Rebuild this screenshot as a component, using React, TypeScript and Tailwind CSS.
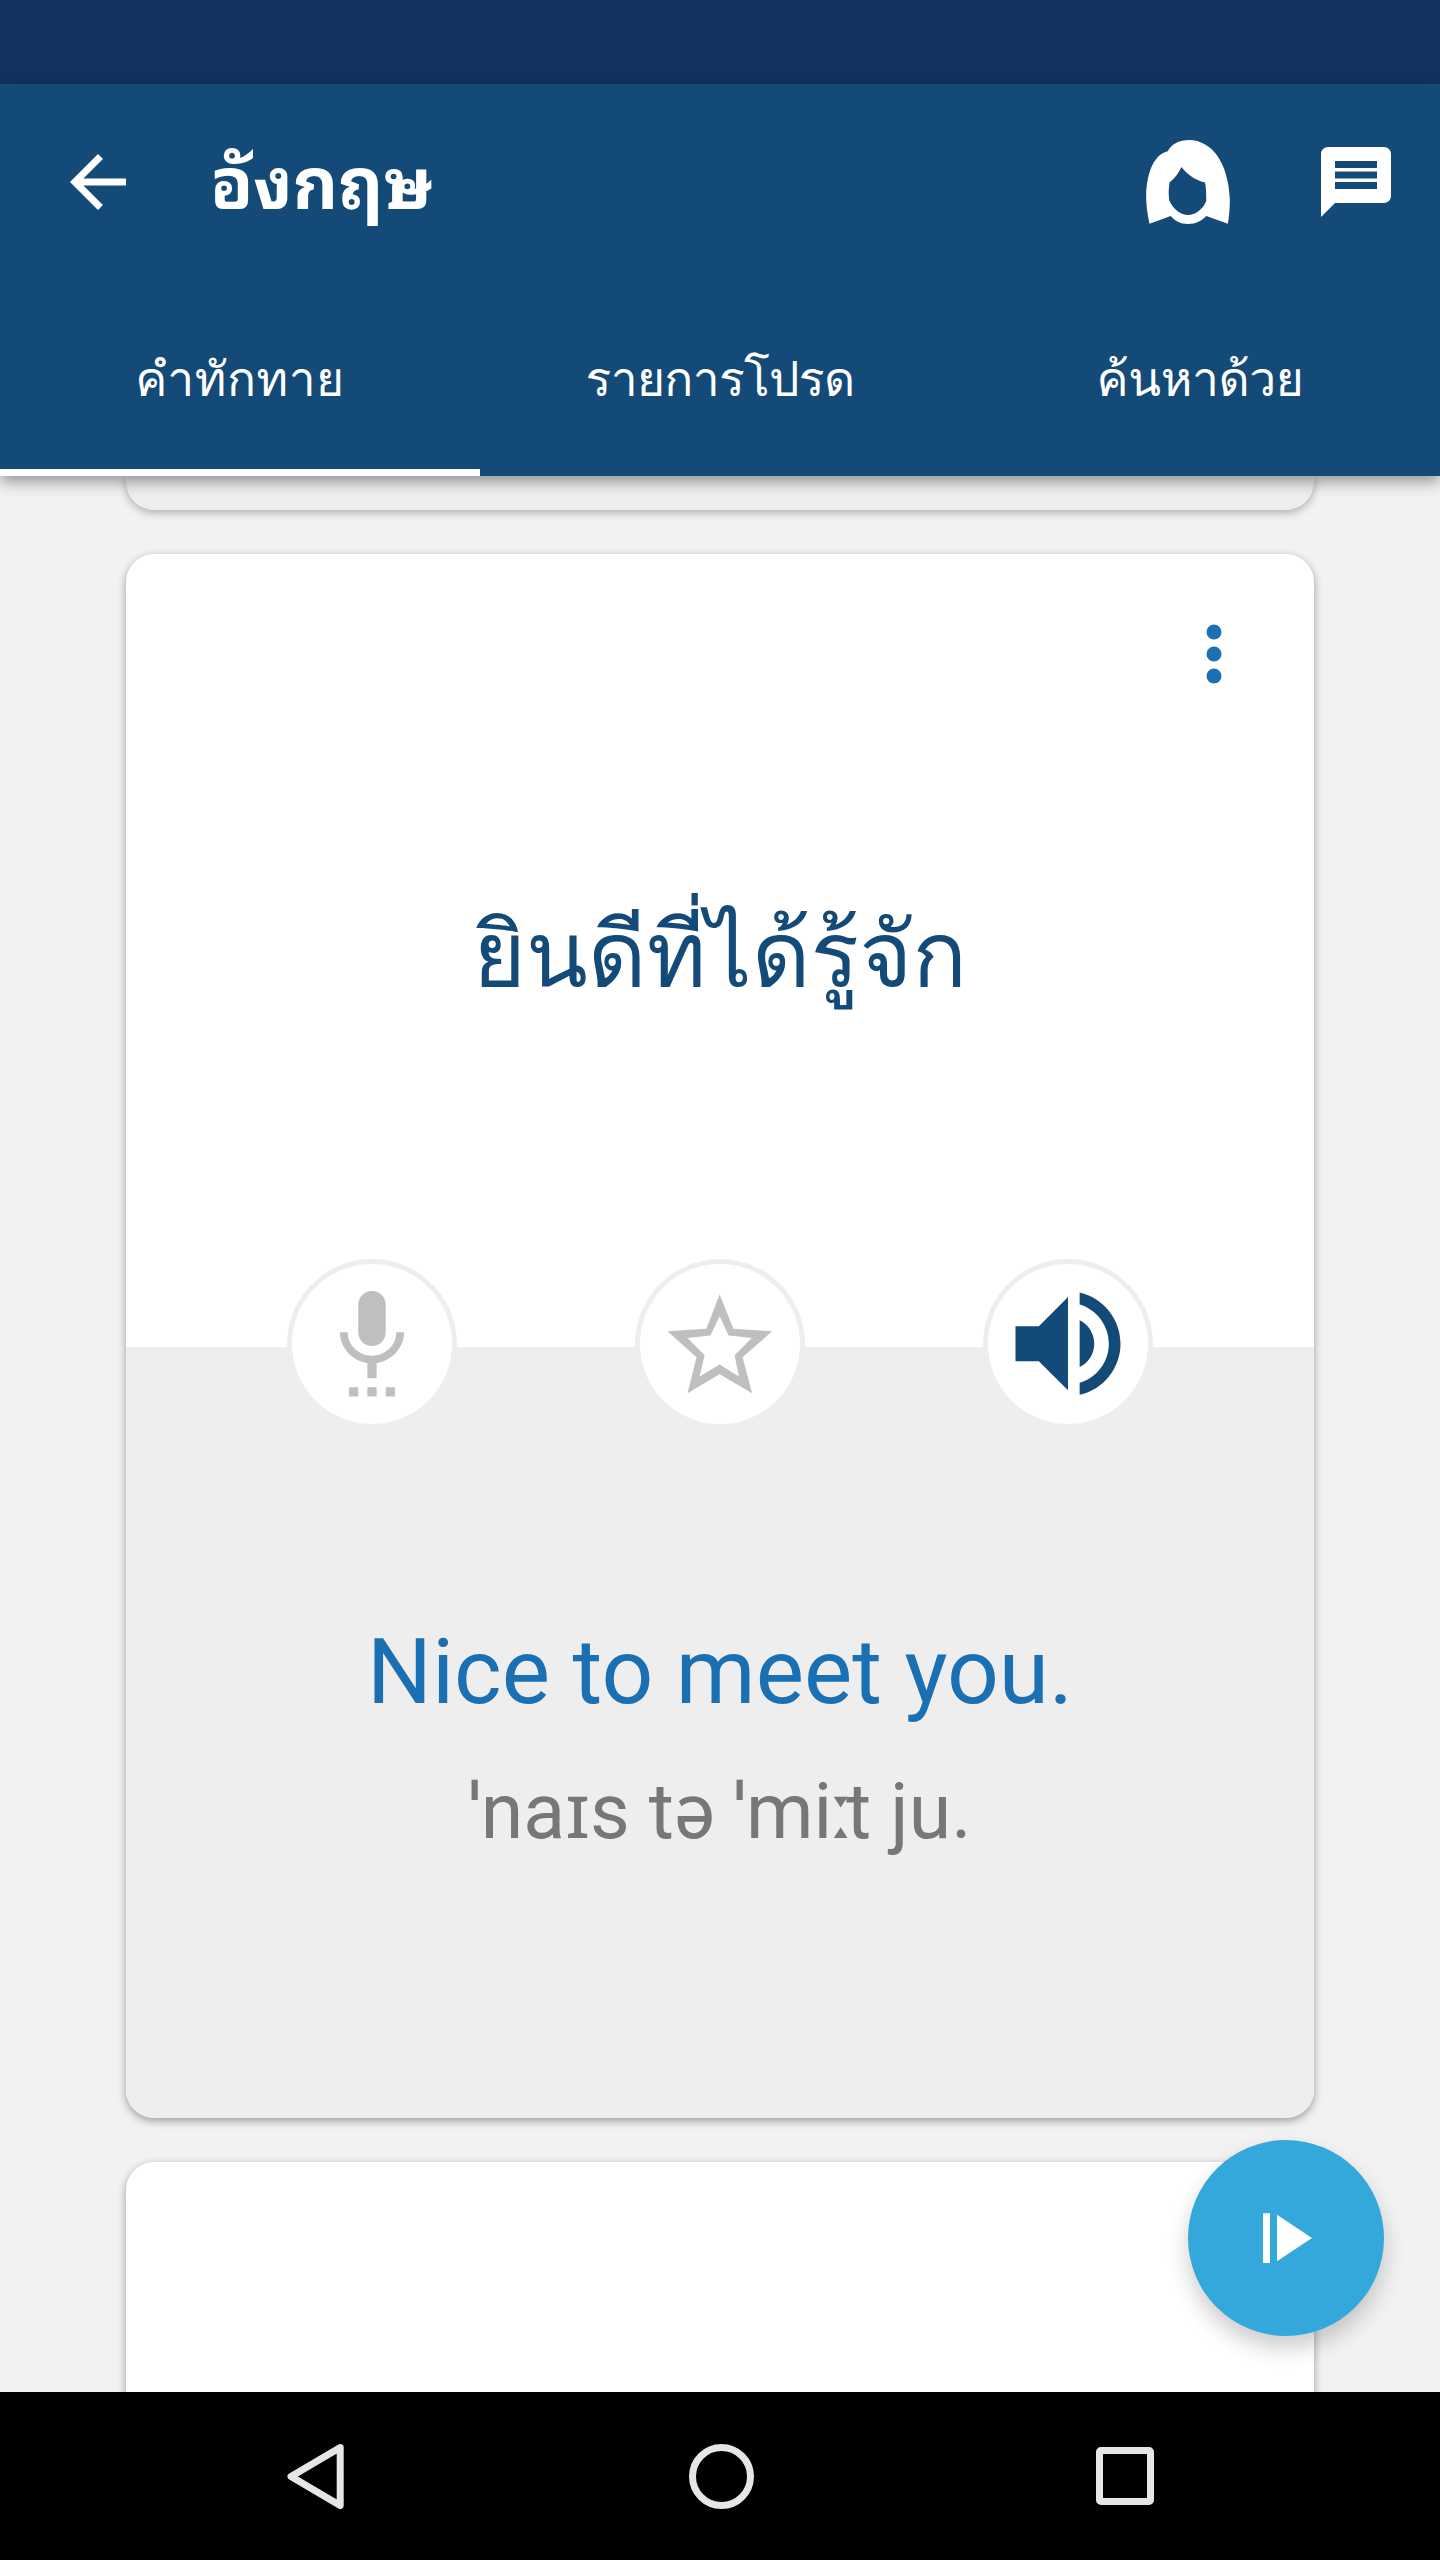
import React from 'react';

function BackArrow() {
  return (
    <svg viewBox="0 0 24 24" className="size-[84px] shrink-0 fill-white">
      <path d="M20 11H7.83l5.59-5.59L12 4l-8 8 8 8 1.41-1.41L7.83 13H20v-2z" />
    </svg>
  );
}

function HairIcon() {
  return (
    <svg viewBox="138 59 252 253" className="size-[84px] shrink-0 fill-white">
      <path
        fillRule="evenodd"
        d="M148 311C140 275 138 248 138 228C140 150 165 102 203 93C215 70 240 59 267 59C335 60 386 125 390 240C390 265 388 290 384 311L319 288C305 303 288 312 264 312C240 312 225 303 212 288ZM244 140C235 160 225 172 208 187Q204 215 207 240C220 270 243 285 264 285C285 285 308 270 319 243Q319 200 315 187C285 180 260 160 244 140Z"
      />
    </svg>
  );
}

function MessageIcon() {
  return (
    <svg viewBox="0 0 24 24" className="size-[84px] shrink-0 fill-white">
      <path d="M20 2H4c-1.1 0-1.99.9-1.99 2L2 22l4-4h14c1.1 0 2-.9 2-2V4c0-1.1-.9-2-2-2zm-2 12H6v-2h12v2zm0-3H6V9h12v2zm0-3H6V6h12v2z" />
    </svg>
  );
}

function RoundButton({ label, children }: { label: string; children: React.ReactNode }) {
  return (
    <button
      aria-label={label}
      className="size-[170px] shrink-0 rounded-full border-[5px] border-[#eeeeee] bg-white"
    >
      <svg viewBox="5 5 160 160" className="size-[160px]">
        {children}
      </svg>
    </button>
  );
}

const tabs = [
  { label: 'คำทักทาย', tracking: 'tracking-[0.5px]' },
  { label: 'รายการโปรด', tracking: 'tracking-[-0.7px]' },
  { label: 'ค้นหาด้วย', tracking: 'tracking-[-0.4px]' },
];

export default function App() {
  return (
    <div className="flex h-[2560px] w-[1440px] flex-col overflow-hidden bg-[#f2f2f2] font-['Roboto','Droid_Sans_Thai','Loma',sans-serif]">
      <div className="h-[84px] shrink-0 bg-[#12325f]" />

      <header className="relative z-10 shrink-0 bg-[#144a78] text-white shadow-[0_6px_14px_rgba(0,0,0,0.38)]">
        <div className="flex h-[196px] items-center pr-[42px] pl-[56px]">
          <BackArrow />
          <h1 className="mb-[8px] ml-[70px] flex-1 font-['Noto_Sans_Thai_Looped','Noto_Sans_Thai',sans-serif] text-[70.5px] leading-[84px] font-bold whitespace-nowrap">
            อังกฤษ
          </h1>
          <HairIcon />
          <div className="w-[84px]" />
          <MessageIcon />
        </div>
        <nav className="grid h-[196px] grid-cols-3">
          {tabs.map((tab, i) => (
            <div key={tab.label} className="flex flex-col">
              <div className="flex h-[189px] items-center justify-center pt-[10px] text-[48px] leading-[60px] whitespace-nowrap">
                <span className={tab.tracking}>{tab.label}</span>
              </div>
              {i === 0 && <div className="h-[7px] bg-white" />}
            </div>
          ))}
        </nav>
      </header>

      <main className="relative flex h-[1916px] shrink-0 flex-col gap-[44px] overflow-hidden px-[126px]">
        <div className="h-[34px] shrink-0 rounded-b-[28px] bg-[#eeeeee] shadow-[0_3px_8px_rgba(0,0,0,0.28)]" />

        <section className="flex h-[1564px] shrink-0 flex-col rounded-[28px] bg-white shadow-[0_3px_8px_rgba(0,0,0,0.36)]">
          <div className="flex h-[705px] shrink-0 flex-col">
            <div className="flex justify-end pt-[70px] pr-[92px]">
              <svg viewBox="0 0 16 60" className="h-[60px] w-[16px] fill-[#1a70b3]">
                <circle cx="8" cy="8" r="7.5" />
                <circle cx="8" cy="30" r="7.5" />
                <circle cx="8" cy="52" r="7.5" />
              </svg>
            </div>
            <p className="mt-[201px] text-center text-[90.5px] leading-[140px] whitespace-nowrap text-[#144a78]">
              ยินดีที่ได้รู้จัก
            </p>
          </div>

          <div className="relative z-10 flex h-[88px] shrink-0 items-start justify-between px-[161px]">
            <RoundButton label="Record">
              <path
                transform="translate(30 27.5) scale(4.583)"
                fill="#bfbfbf"
                d="M7 24h2v-2H7v2zm5-11c1.66 0 2.99-1.34 2.99-3L15 4c0-1.66-1.34-3-3-3S9 2.34 9 4v6c0 1.66 1.34 3 3 3zm-1 11h2v-2h-2v2zm4 0h2v-2h-2v2zm4-14h-1.7c0 3-2.54 5.1-5.3 5.1S6.7 13 6.7 10H5c0 3.41 2.72 6.23 6 6.72V20h2v-3.28c3.28-.49 6-3.31 6-6.72z"
              />
            </RoundButton>
            <RoundButton label="Favorite">
              <path
                fill="#bfbfbf"
                fillRule="evenodd"
                d="M84.6 35.6L98.4 69.8L137.1 72.3L107.6 98.3L117.1 134.3L84.6 115.3L52.5 134.3L61.5 98.3L32.5 72.3L71.4 69.8ZM84.6 57.3L75.4 76.6L52.5 79L69.6 96.3L64.6 117.6L84.6 105.6L103.9 117.6L99.6 96.3L116.8 79L93.6 76.6Z"
              />
            </RoundButton>
            <RoundButton label="Listen">
              <path
                transform="translate(15 14.7) scale(5.833)"
                fill="#144a78"
                d="M14 3.23V5.29C16.89 6.15 19 8.83 19 12C19 15.17 16.89 17.84 14 18.7V20.77C18 19.86 21 16.28 21 12C21 7.72 18 4.14 14 3.23M16.5 12C16.5 10.23 15.5 8.71 14 7.97V16C15.5 15.29 16.5 13.76 16.5 12M3 9V15H7L12 20V4L7 9H3Z"
              />
            </RoundButton>
          </div>

          <div className="flex-1 rounded-b-[28px] bg-[#eeeeee] pt-[265px] text-center whitespace-nowrap">
            <p className="text-[91px] leading-[120px] text-[#1a70b3]">Nice to meet you.</p>
            <p className="mt-[28px] font-['Roboto','Noto_Sans',sans-serif] text-[77px] leading-[104px] text-[#777777]">
              ˈnaɪs tə ˈm<span className="tracking-[-4px]">i</span>
              <span className="tracking-[-7px]">ː</span>t ju.
            </p>
          </div>
        </section>

        <section className="h-[260px] shrink-0 rounded-t-[28px] bg-white shadow-[0_3px_8px_rgba(0,0,0,0.36)]" />

        <button
          aria-label="Play all"
          className="absolute right-[56px] bottom-[56px] size-[196px] rounded-full bg-[#35a8db] shadow-[0_12px_22px_rgba(0,0,0,0.2)]"
        >
          <svg viewBox="0 0 196 196" className="size-[196px] fill-white">
            <path d="M75 73.3h7v49.7h-7zM89 74.7L124 98L89 121.3z" />
          </svg>
        </button>
      </main>

      <footer className="flex h-[168px] shrink-0 items-center justify-between bg-black pr-[286px] pl-[285px]">
        <svg viewBox="285 2442 61 69" className="h-[69px] w-[61px] fill-none stroke-[#e6e6e6] stroke-[7]">
          <path strokeLinejoin="round" d="M340.2 2447.5L291 2476.5L340.2 2505.5Z" />
        </svg>
        <div className="size-[65px] rounded-full border-[7px] border-[#e6e6e6]" />
        <div className="size-[58px] rounded-[5px] border-[7px] border-[#e6e6e6]" />
      </footer>
    </div>
  );
}
